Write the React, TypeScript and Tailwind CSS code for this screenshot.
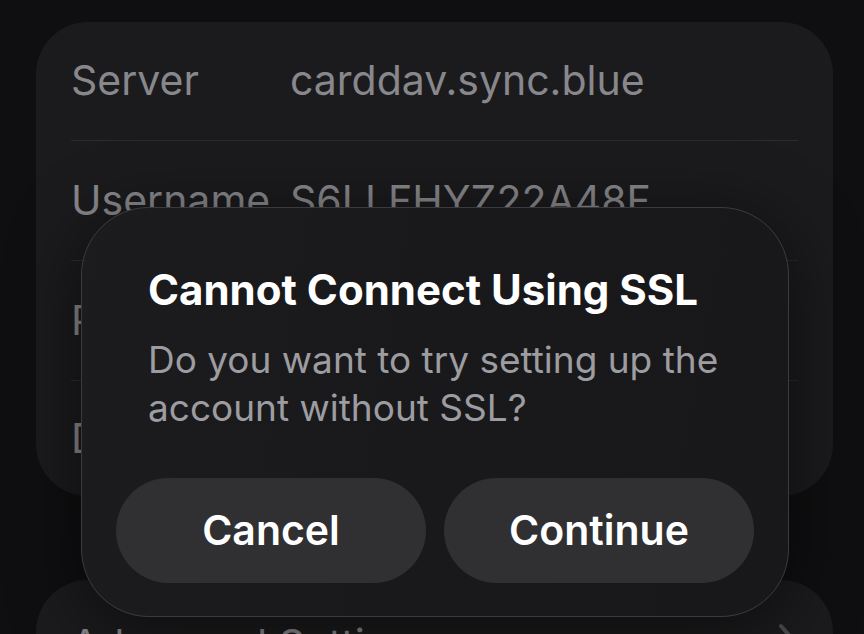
const rows = [
  { label: 'Server', value: 'carddav.sync.blue', h: 'h-[119px]' },
  { label: 'Username', value: 'S6LLFHYZ22A48F', h: 'h-[120px]' },
  { label: 'Password', value: '••••••••••', h: 'h-[120px]' },
  { label: 'Description', value: 'CardDAV', h: 'h-[115px]' },
];

export default function App() {
  return (
    <div
      className="relative h-[634px] w-[864px] overflow-hidden bg-[#0f0f11]"
      style={{ fontFamily: 'Inter, "Noto Sans", sans-serif' }}
    >
      <div className="flex flex-col pl-[36px] pr-[31px] pt-[22px]">
        {/* Account card */}
        <div className="flex flex-col rounded-[52px] bg-[#1b1b1d] pl-[35px] pr-[35px]">
          {rows.map((r, i) => (
            <div
              key={r.label}
              className={`flex ${r.h} items-center text-[41px] text-[#88888c] ${
                i < rows.length - 1 ? 'border-b border-[#2b2b2d]' : ''
              }`}
            >
              <span className="w-[219px] shrink-0 whitespace-nowrap">{r.label}</span>
              <span className="whitespace-nowrap">{r.value}</span>
            </div>
          ))}
        </div>

        {/* Advanced settings card */}
        <div className="mt-[84px] flex h-[120px] items-start justify-between rounded-[52px] bg-[#1b1b1d] pl-[35px] pr-[32px] pt-[34px]">
          <span className="whitespace-nowrap text-[41px] text-[#88888c]">Advanced Settings</span>
          <svg viewBox="0 0 24 40" className="mt-[8px] h-[40px] w-[24px]">
            <path d="M4 4 L18 20 L4 36" fill="none" stroke="#4a4a4d" strokeWidth="4" strokeLinecap="round" strokeLinejoin="round" />
          </svg>
        </div>
      </div>

      {/* Alert */}
      <div className="absolute left-[81px] top-[207px] flex h-[410px] w-[708px] flex-col rounded-[68px] border-[1.5px] border-[#3b3b3e] bg-[linear-gradient(100deg,#1c1c1e_0%,#19191b_45%,#18181a_100%)] shadow-[0_12px_70px_rgba(0,0,0,0.55)]">
        <div className="pl-[66px] pr-[40px] pt-[56px]">
          <h1 className="text-[42px] font-bold leading-[52px] text-white">Cannot Connect Using SSL</h1>
          <p className="mt-[20px] text-[37px] leading-[48px] text-[#9d9da1]">
            Do you want to try setting up the account without SSL?
          </p>
        </div>
        <div className="mt-auto flex gap-[18px] px-[34px] pb-[33px]">
          <button className="flex h-[105px] flex-1 items-center justify-center rounded-full bg-[#303032] text-[41px] font-semibold text-white">
            Cancel
          </button>
          <button className="flex h-[105px] flex-1 items-center justify-center rounded-full bg-[#303032] text-[41px] font-semibold text-white">
            Continue
          </button>
        </div>
      </div>
    </div>
  );
}
